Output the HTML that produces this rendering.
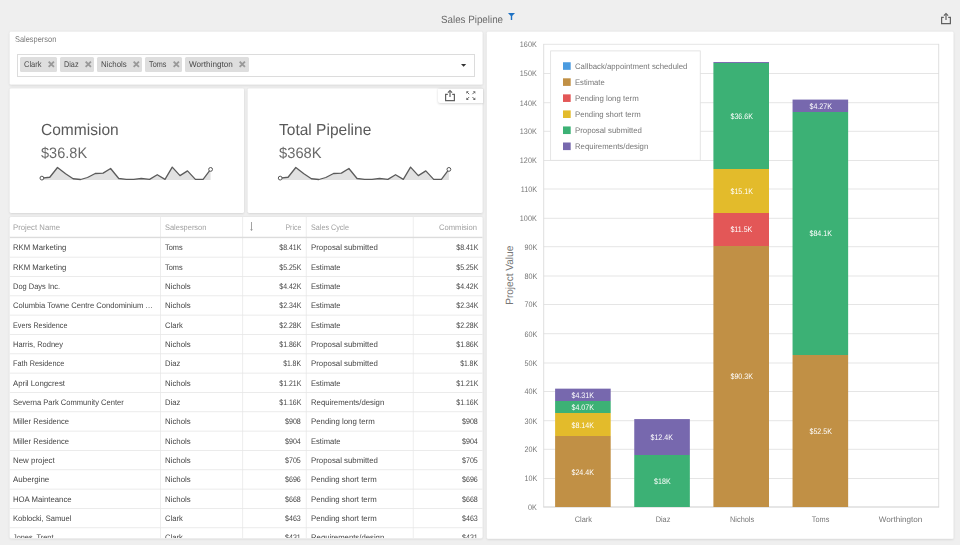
<!DOCTYPE html>
<html><head><meta charset="utf-8"><title>Sales Pipeline</title>
<style>
html,body{margin:0;padding:0}
body{width:960px;height:545px;overflow:hidden;position:relative;background:#efefef;font-family:"Liberation Sans",sans-serif}
.t{position:absolute;white-space:nowrap;line-height:1;display:block;text-rendering:geometricPrecision}
.p{position:absolute;background:#fff;box-shadow:0 .75px 2.25px rgba(0,0,0,.13);overflow:hidden}
.a{position:absolute}
svg{position:absolute;overflow:visible}
</style></head><body>
<svg style="left:0;top:0" width="0" height="0"><defs><filter id="sh" x="-5%" y="-5%" width="110%" height="112%"><feDropShadow dx="0" dy="0.6" stdDeviation="1.1" flood-color="#000" flood-opacity="0.14"/></filter></defs></svg>
<span class="t" style="top:15.00px;font-size:10.5px;color:#6a6a6a;left:440.78px;transform:scaleX(0.9324);transform-origin:0 0;">Sales Pipeline</span>
<svg style="left:507.9px;top:13.2px" width="7" height="7" viewBox="0 0 7 7"><path d="M0 0H7L4.2 3.1V7H2.8V3.1Z" fill="#1f72c4"/></svg>
<svg style="left:940.80px;top:13.00px" width="10" height="11.2" viewBox="0 0 10 11.2"><path d="M2.8 4.3H0.6V10.6H9.4V4.3H7.2" fill="none" stroke="#616161" stroke-width="1.2"/><path d="M5 7V1.2" fill="none" stroke="#616161" stroke-width="1.2"/><path d="M2.9 2.7L5 0.5L7.1 2.7" fill="none" stroke="#616161" stroke-width="1.2"/></svg>
<svg style="left:0;top:0" width="960" height="545" viewBox="0 0 960 545"><rect x="9.75" y="31.75" width="472.75" height="52.85" rx="1.4" fill="#fff" filter="url(#sh)"/></svg>
<span class="t" style="top:35.00px;font-size:8.5px;color:#7a7a7a;left:15.37px;transform:scaleX(0.8733);transform-origin:0 0;">Salesperson</span>
<div class="a" style="left:17.25px;top:54px;width:457.5px;height:23px;box-sizing:border-box;border:1px solid #dcdcdc;background:#fff"></div>
<div class="a" style="left:20px;top:57px;width:37.00px;height:14.6px;background:#dedede;border-radius:1.5px"></div>
<span class="t" style="top:60.00px;font-size:8.3px;color:#4a4a4a;left:23.93px;transform:scaleX(0.9060);transform-origin:0 0;">Clark</span>
<svg style="left:47.60px;top:61.30px" width="6.6" height="6.6" viewBox="0 0 6 6"><path d="M0.6 0.6L5.4 5.4M5.4 0.6L0.6 5.4" stroke="#999" stroke-width="1.7" fill="none"/></svg>
<div class="a" style="left:60px;top:57px;width:34.00px;height:14.6px;background:#dedede;border-radius:1.5px"></div>
<span class="t" style="top:60.00px;font-size:8.3px;color:#4a4a4a;left:63.93px;transform:scaleX(0.8761);transform-origin:0 0;">Diaz</span>
<svg style="left:84.60px;top:61.30px" width="6.6" height="6.6" viewBox="0 0 6 6"><path d="M0.6 0.6L5.4 5.4M5.4 0.6L0.6 5.4" stroke="#999" stroke-width="1.7" fill="none"/></svg>
<div class="a" style="left:97px;top:57px;width:45.25px;height:14.6px;background:#dedede;border-radius:1.5px"></div>
<span class="t" style="top:60.00px;font-size:8.3px;color:#4a4a4a;left:100.93px;transform:scaleX(0.9479);transform-origin:0 0;">Nichols</span>
<svg style="left:132.85px;top:61.30px" width="6.6" height="6.6" viewBox="0 0 6 6"><path d="M0.6 0.6L5.4 5.4M5.4 0.6L0.6 5.4" stroke="#999" stroke-width="1.7" fill="none"/></svg>
<div class="a" style="left:145.25px;top:57px;width:36.85px;height:14.6px;background:#dedede;border-radius:1.5px"></div>
<span class="t" style="top:60.00px;font-size:8.3px;color:#4a4a4a;left:149.18px;transform:scaleX(0.8773);transform-origin:0 0;">Toms</span>
<svg style="left:172.70px;top:61.30px" width="6.6" height="6.6" viewBox="0 0 6 6"><path d="M0.6 0.6L5.4 5.4M5.4 0.6L0.6 5.4" stroke="#999" stroke-width="1.7" fill="none"/></svg>
<div class="a" style="left:185.25px;top:57px;width:63.25px;height:14.6px;background:#dedede;border-radius:1.5px"></div>
<span class="t" style="top:60.00px;font-size:8.3px;color:#4a4a4a;left:189.18px;transform:scaleX(0.9820);transform-origin:0 0;">Worthington</span>
<svg style="left:239.10px;top:61.30px" width="6.6" height="6.6" viewBox="0 0 6 6"><path d="M0.6 0.6L5.4 5.4M5.4 0.6L0.6 5.4" stroke="#999" stroke-width="1.7" fill="none"/></svg>
<svg style="left:460.9px;top:64px" width="5.2" height="2.8" viewBox="0 0 5.2 2.8"><path d="M0 0H5.2L2.6 2.8Z" fill="#333"/></svg>
<svg style="left:0;top:0" width="960" height="545" viewBox="0 0 960 545"><rect x="9.75" y="88.4" width="234.25" height="124.60" rx="1.4" fill="#fff" filter="url(#sh)"/></svg>
<span class="t" style="top:123.00px;font-size:16px;color:#5a5a5a;left:40.53px;transform:scaleX(0.9709);transform-origin:0 0;">Commision</span>
<span class="t" style="top:146.00px;font-size:15.2px;color:#6a6a6a;left:40.82px;transform:scaleX(0.9573);transform-origin:0 0;">$36.8K</span>
<svg style="left:0;top:0" width="960" height="545" viewBox="0 0 960 545"><polygon points="41.90,179.9 41.90,178.10 49.75,177.25 57.50,167.50 65.60,173.75 73.10,178.75 80.60,179.50 87.50,177.50 95.25,173.50 103.10,173.10 110.60,168.50 118.75,178.50 126.25,179.40 133.75,179.40 141.25,178.50 149.60,179.40 157.25,174.75 165.00,179.40 172.25,167.10 180.00,175.60 187.50,170.90 195.40,179.40 203.10,179.40 210.60,169.40 210.60,179.9" fill="#e1e1e1"/><polyline points="41.90,178.10 49.75,177.25 57.50,167.50 65.60,173.75 73.10,178.75 80.60,179.50 87.50,177.50 95.25,173.50 103.10,173.10 110.60,168.50 118.75,178.50 126.25,179.40 133.75,179.40 141.25,178.50 149.60,179.40 157.25,174.75 165.00,179.40 172.25,167.10 180.00,175.60 187.50,170.90 195.40,179.40 203.10,179.40 210.60,169.40" fill="none" stroke="#5b5b5b" stroke-width="1.3" stroke-linejoin="round"/><circle cx="41.90" cy="178.10" r="1.9" fill="#fff" stroke="#555" stroke-width="1"/><circle cx="210.60" cy="169.40" r="1.9" fill="#fff" stroke="#555" stroke-width="1"/></svg>
<svg style="left:0;top:0" width="960" height="545" viewBox="0 0 960 545"><rect x="247.75" y="88.4" width="234.75" height="124.60" rx="1.4" fill="#fff" filter="url(#sh)"/></svg>
<span class="t" style="top:123.00px;font-size:16px;color:#5a5a5a;left:278.83px;transform:scaleX(0.9702);transform-origin:0 0;">Total Pipeline</span>
<span class="t" style="top:146.00px;font-size:15.2px;color:#6a6a6a;left:279.12px;transform:scaleX(0.9696);transform-origin:0 0;">$368K</span>
<svg style="left:0;top:0" width="960" height="545" viewBox="0 0 960 545"><polygon points="280.20,179.9 280.20,178.10 288.05,177.25 295.80,167.50 303.90,173.75 311.40,178.75 318.90,179.50 325.80,177.50 333.55,173.50 341.40,173.10 348.90,168.50 357.05,178.50 364.55,179.40 372.05,179.40 379.55,178.50 387.90,179.40 395.55,174.75 403.30,179.40 410.55,167.10 418.30,175.60 425.80,170.90 433.70,179.40 441.40,179.40 448.90,169.40 448.90,179.9" fill="#e1e1e1"/><polyline points="280.20,178.10 288.05,177.25 295.80,167.50 303.90,173.75 311.40,178.75 318.90,179.50 325.80,177.50 333.55,173.50 341.40,173.10 348.90,168.50 357.05,178.50 364.55,179.40 372.05,179.40 379.55,178.50 387.90,179.40 395.55,174.75 403.30,179.40 410.55,167.10 418.30,175.60 425.80,170.90 433.70,179.40 441.40,179.40 448.90,169.40" fill="none" stroke="#5b5b5b" stroke-width="1.3" stroke-linejoin="round"/><circle cx="280.20" cy="178.10" r="1.9" fill="#fff" stroke="#555" stroke-width="1"/><circle cx="448.90" cy="169.40" r="1.9" fill="#fff" stroke="#555" stroke-width="1"/></svg>
<div class="a" style="left:437.5px;top:88.5px;width:45px;height:14.8px;background:#fff;box-shadow:0 .75px 2.5px rgba(0,0,0,.16);border-radius:0 0 0 2px"></div>
<svg style="left:445.00px;top:89.80px" width="10" height="11.2" viewBox="0 0 10 11.2"><path d="M2.8 4.3H0.6V10.6H9.4V4.3H7.2" fill="none" stroke="#616161" stroke-width="1.2"/><path d="M5 7V1.2" fill="none" stroke="#616161" stroke-width="1.2"/><path d="M2.9 2.7L5 0.5L7.1 2.7" fill="none" stroke="#616161" stroke-width="1.2"/></svg>
<svg style="left:465.80px;top:90.80px" width="9.6" height="9.2" viewBox="0 0 9.6 9.2"><path d="M0.30 0.30h2.50l-2.50 2.50z" fill="#666"/><path d="M1.10 1.10L3.20 3.20" stroke="#666" stroke-width="1.0"/><path d="M9.30 0.30h-2.50l2.50 2.50z" fill="#666"/><path d="M8.50 1.10L6.40 3.20" stroke="#666" stroke-width="1.0"/><path d="M0.30 8.90h2.50l-2.50 -2.50z" fill="#666"/><path d="M1.10 8.10L3.20 6.00" stroke="#666" stroke-width="1.0"/><path d="M9.30 8.90h-2.50l2.50 -2.50z" fill="#666"/><path d="M8.50 8.10L6.40 6.00" stroke="#666" stroke-width="1.0"/></svg>
<svg style="left:0;top:0" width="960" height="545" viewBox="0 0 960 545"><rect x="9.75" y="217.0" width="472.75" height="321.20" rx="1.4" fill="#fff" filter="url(#sh)"/></svg>
<svg style="left:0;top:0" width="960" height="538.2" viewBox="0 0 960 538.2">
<rect x="160.00" y="217.0" width="0.8" height="321.20" fill="#e9e9e9"/>
<rect x="242.30" y="217.0" width="0.8" height="321.20" fill="#e9e9e9"/>
<rect x="305.80" y="217.0" width="0.8" height="321.20" fill="#e9e9e9"/>
<rect x="412.80" y="217.0" width="0.8" height="321.20" fill="#e9e9e9"/>
<rect x="9.75" y="236.75" width="472.75" height="1.4" fill="#dcdcdc"/>
<rect x="9.75" y="256.75" width="472.75" height="0.8" fill="#e6e6e6"/>
<rect x="9.75" y="276.08" width="472.75" height="0.8" fill="#e6e6e6"/>
<rect x="9.75" y="295.41" width="472.75" height="0.8" fill="#e6e6e6"/>
<rect x="9.75" y="314.74" width="472.75" height="0.8" fill="#e6e6e6"/>
<rect x="9.75" y="334.07" width="472.75" height="0.8" fill="#e6e6e6"/>
<rect x="9.75" y="353.40" width="472.75" height="0.8" fill="#e6e6e6"/>
<rect x="9.75" y="372.73" width="472.75" height="0.8" fill="#e6e6e6"/>
<rect x="9.75" y="392.06" width="472.75" height="0.8" fill="#e6e6e6"/>
<rect x="9.75" y="411.39" width="472.75" height="0.8" fill="#e6e6e6"/>
<rect x="9.75" y="430.72" width="472.75" height="0.8" fill="#e6e6e6"/>
<rect x="9.75" y="450.05" width="472.75" height="0.8" fill="#e6e6e6"/>
<rect x="9.75" y="469.38" width="472.75" height="0.8" fill="#e6e6e6"/>
<rect x="9.75" y="488.71" width="472.75" height="0.8" fill="#e6e6e6"/>
<rect x="9.75" y="508.04" width="472.75" height="0.8" fill="#e6e6e6"/>
<rect x="9.75" y="527.37" width="472.75" height="0.8" fill="#e6e6e6"/>
</svg>
<div class="a" style="left:0;top:0;width:960px;height:538.20px;overflow:hidden">
<span class="t" style="top:224.00px;font-size:8px;color:#a0a0a0;left:13.39px;transform:scaleX(0.9692);transform-origin:0 0;">Project Name</span>
<span class="t" style="top:224.00px;font-size:8px;color:#a0a0a0;left:165.00px;transform:scaleX(0.9300);transform-origin:0 0;">Salesperson</span>
<span class="t" style="top:224.00px;font-size:8px;color:#a0a0a0;right:659.25px;transform:scaleX(0.8641);transform-origin:100% 0;">Price</span>
<span class="t" style="top:224.00px;font-size:8px;color:#a0a0a0;left:310.89px;transform:scaleX(0.8989);transform-origin:0 0;">Sales Cycle</span>
<span class="t" style="top:224.00px;font-size:8px;color:#a0a0a0;right:482.50px;transform:scaleX(0.9498);transform-origin:100% 0;">Commision</span>
<svg style="left:248.95px;top:222px" width="5" height="9.2" viewBox="0 0 5 9.2"><path d="M2.5 0V8.2" fill="none" stroke="#999" stroke-width="0.9"/><path d="M1.1 7.3H3.9L2.5 9.1Z" fill="#999"/></svg>
<span class="t" style="top:244.00px;font-size:8px;color:#444;left:13.39px;transform:scaleX(0.9654);transform-origin:0 0;">RKM Marketing</span>
<span class="t" style="top:244.00px;font-size:8px;color:#444;left:164.64px;transform:scaleX(0.9271);transform-origin:0 0;">Toms</span>
<span class="t" style="top:244.00px;font-size:8px;color:#444;right:658.80px;transform:scaleX(0.8677);transform-origin:100% 0;">$8.41K</span>
<span class="t" style="top:244.00px;font-size:8px;color:#444;left:310.64px;transform:scaleX(0.9779);transform-origin:0 0;">Proposal submitted</span>
<span class="t" style="top:244.00px;font-size:8px;color:#444;right:482.10px;transform:scaleX(0.8677);transform-origin:100% 0;">$8.41K</span>
<span class="t" style="top:264.00px;font-size:8px;color:#444;left:13.39px;transform:scaleX(0.9654);transform-origin:0 0;">RKM Marketing</span>
<span class="t" style="top:264.00px;font-size:8px;color:#444;left:164.64px;transform:scaleX(0.9271);transform-origin:0 0;">Toms</span>
<span class="t" style="top:264.00px;font-size:8px;color:#444;right:658.80px;transform:scaleX(0.8677);transform-origin:100% 0;">$5.25K</span>
<span class="t" style="top:264.00px;font-size:8px;color:#444;left:310.64px;transform:scaleX(0.9469);transform-origin:0 0;">Estimate</span>
<span class="t" style="top:264.00px;font-size:8px;color:#444;right:482.10px;transform:scaleX(0.8677);transform-origin:100% 0;">$5.25K</span>
<span class="t" style="top:283.00px;font-size:8px;color:#444;left:13.39px;transform:scaleX(0.9349);transform-origin:0 0;">Dog Days Inc.</span>
<span class="t" style="top:283.00px;font-size:8px;color:#444;left:164.64px;transform:scaleX(0.9805);transform-origin:0 0;">Nichols</span>
<span class="t" style="top:283.00px;font-size:8px;color:#444;right:658.80px;transform:scaleX(0.8677);transform-origin:100% 0;">$4.42K</span>
<span class="t" style="top:283.00px;font-size:8px;color:#444;left:310.64px;transform:scaleX(0.9469);transform-origin:0 0;">Estimate</span>
<span class="t" style="top:283.00px;font-size:8px;color:#444;right:482.10px;transform:scaleX(0.8677);transform-origin:100% 0;">$4.42K</span>
<span class="t" style="top:302.00px;font-size:8px;color:#444;left:13.39px;transform:scaleX(0.9520);transform-origin:0 0;">Columbia Towne Centre Condominium …</span>
<span class="t" style="top:302.00px;font-size:8px;color:#444;left:164.64px;transform:scaleX(0.9805);transform-origin:0 0;">Nichols</span>
<span class="t" style="top:302.00px;font-size:8px;color:#444;right:658.80px;transform:scaleX(0.8677);transform-origin:100% 0;">$2.34K</span>
<span class="t" style="top:302.00px;font-size:8px;color:#444;left:310.64px;transform:scaleX(0.9469);transform-origin:0 0;">Estimate</span>
<span class="t" style="top:302.00px;font-size:8px;color:#444;right:482.10px;transform:scaleX(0.8677);transform-origin:100% 0;">$2.34K</span>
<span class="t" style="top:322.00px;font-size:8px;color:#444;left:13.39px;transform:scaleX(0.9007);transform-origin:0 0;">Evers Residence</span>
<span class="t" style="top:322.00px;font-size:8px;color:#444;left:164.64px;transform:scaleX(0.9492);transform-origin:0 0;">Clark</span>
<span class="t" style="top:322.00px;font-size:8px;color:#444;right:658.80px;transform:scaleX(0.8677);transform-origin:100% 0;">$2.28K</span>
<span class="t" style="top:322.00px;font-size:8px;color:#444;left:310.64px;transform:scaleX(0.9469);transform-origin:0 0;">Estimate</span>
<span class="t" style="top:322.00px;font-size:8px;color:#444;right:482.10px;transform:scaleX(0.8677);transform-origin:100% 0;">$2.28K</span>
<span class="t" style="top:341.00px;font-size:8px;color:#444;left:13.39px;transform:scaleX(0.9366);transform-origin:0 0;">Harris, Rodney</span>
<span class="t" style="top:341.00px;font-size:8px;color:#444;left:164.64px;transform:scaleX(0.9805);transform-origin:0 0;">Nichols</span>
<span class="t" style="top:341.00px;font-size:8px;color:#444;right:658.80px;transform:scaleX(0.8677);transform-origin:100% 0;">$1.86K</span>
<span class="t" style="top:341.00px;font-size:8px;color:#444;left:310.64px;transform:scaleX(0.9779);transform-origin:0 0;">Proposal submitted</span>
<span class="t" style="top:341.00px;font-size:8px;color:#444;right:482.10px;transform:scaleX(0.8677);transform-origin:100% 0;">$1.86K</span>
<span class="t" style="top:360.00px;font-size:8px;color:#444;left:13.39px;transform:scaleX(0.9141);transform-origin:0 0;">Fath Residence</span>
<span class="t" style="top:360.00px;font-size:8px;color:#444;left:164.64px;transform:scaleX(0.9510);transform-origin:0 0;">Diaz</span>
<span class="t" style="top:360.00px;font-size:8px;color:#444;right:658.80px;transform:scaleX(0.8490);transform-origin:100% 0;">$1.8K</span>
<span class="t" style="top:360.00px;font-size:8px;color:#444;left:310.64px;transform:scaleX(0.9779);transform-origin:0 0;">Proposal submitted</span>
<span class="t" style="top:360.00px;font-size:8px;color:#444;right:482.10px;transform:scaleX(0.8490);transform-origin:100% 0;">$1.8K</span>
<span class="t" style="top:380.00px;font-size:8px;color:#444;left:13.39px;transform:scaleX(0.9740);transform-origin:0 0;">April Longcrest</span>
<span class="t" style="top:380.00px;font-size:8px;color:#444;left:164.64px;transform:scaleX(0.9805);transform-origin:0 0;">Nichols</span>
<span class="t" style="top:380.00px;font-size:8px;color:#444;right:658.80px;transform:scaleX(0.8677);transform-origin:100% 0;">$1.21K</span>
<span class="t" style="top:380.00px;font-size:8px;color:#444;left:310.64px;transform:scaleX(0.9469);transform-origin:0 0;">Estimate</span>
<span class="t" style="top:380.00px;font-size:8px;color:#444;right:482.10px;transform:scaleX(0.8677);transform-origin:100% 0;">$1.21K</span>
<span class="t" style="top:399.00px;font-size:8px;color:#444;left:13.39px;transform:scaleX(0.9433);transform-origin:0 0;">Severna Park Community Center</span>
<span class="t" style="top:399.00px;font-size:8px;color:#444;left:164.64px;transform:scaleX(0.9510);transform-origin:0 0;">Diaz</span>
<span class="t" style="top:399.00px;font-size:8px;color:#444;right:658.80px;transform:scaleX(0.8677);transform-origin:100% 0;">$1.16K</span>
<span class="t" style="top:399.00px;font-size:8px;color:#444;left:310.64px;transform:scaleX(0.9685);transform-origin:0 0;">Requirements/design</span>
<span class="t" style="top:399.00px;font-size:8px;color:#444;right:482.10px;transform:scaleX(0.8677);transform-origin:100% 0;">$1.16K</span>
<span class="t" style="top:418.00px;font-size:8px;color:#444;left:13.39px;transform:scaleX(0.9482);transform-origin:0 0;">Miller Residence</span>
<span class="t" style="top:418.00px;font-size:8px;color:#444;left:164.64px;transform:scaleX(0.9805);transform-origin:0 0;">Nichols</span>
<span class="t" style="top:418.00px;font-size:8px;color:#444;right:658.80px;transform:scaleX(0.8878);transform-origin:100% 0;">$908</span>
<span class="t" style="top:418.00px;font-size:8px;color:#444;left:310.64px;transform:scaleX(0.9814);transform-origin:0 0;">Pending long term</span>
<span class="t" style="top:418.00px;font-size:8px;color:#444;right:482.10px;transform:scaleX(0.8878);transform-origin:100% 0;">$908</span>
<span class="t" style="top:438.00px;font-size:8px;color:#444;left:13.39px;transform:scaleX(0.9482);transform-origin:0 0;">Miller Residence</span>
<span class="t" style="top:438.00px;font-size:8px;color:#444;left:164.64px;transform:scaleX(0.9805);transform-origin:0 0;">Nichols</span>
<span class="t" style="top:438.00px;font-size:8px;color:#444;right:658.80px;transform:scaleX(0.8878);transform-origin:100% 0;">$904</span>
<span class="t" style="top:438.00px;font-size:8px;color:#444;left:310.64px;transform:scaleX(0.9469);transform-origin:0 0;">Estimate</span>
<span class="t" style="top:438.00px;font-size:8px;color:#444;right:482.10px;transform:scaleX(0.8878);transform-origin:100% 0;">$904</span>
<span class="t" style="top:457.00px;font-size:8px;color:#444;left:13.39px;transform:scaleX(0.9877);transform-origin:0 0;">New project</span>
<span class="t" style="top:457.00px;font-size:8px;color:#444;left:164.64px;transform:scaleX(0.9805);transform-origin:0 0;">Nichols</span>
<span class="t" style="top:457.00px;font-size:8px;color:#444;right:658.80px;transform:scaleX(0.8878);transform-origin:100% 0;">$705</span>
<span class="t" style="top:457.00px;font-size:8px;color:#444;left:310.64px;transform:scaleX(0.9779);transform-origin:0 0;">Proposal submitted</span>
<span class="t" style="top:457.00px;font-size:8px;color:#444;right:482.10px;transform:scaleX(0.8878);transform-origin:100% 0;">$705</span>
<span class="t" style="top:476.00px;font-size:8px;color:#444;left:13.39px;transform:scaleX(0.9931);transform-origin:0 0;">Aubergine</span>
<span class="t" style="top:476.00px;font-size:8px;color:#444;left:164.64px;transform:scaleX(0.9805);transform-origin:0 0;">Nichols</span>
<span class="t" style="top:476.00px;font-size:8px;color:#444;right:658.80px;transform:scaleX(0.8878);transform-origin:100% 0;">$696</span>
<span class="t" style="top:476.00px;font-size:8px;color:#444;left:310.64px;transform:scaleX(0.9723);transform-origin:0 0;">Pending short term</span>
<span class="t" style="top:476.00px;font-size:8px;color:#444;right:482.10px;transform:scaleX(0.8878);transform-origin:100% 0;">$696</span>
<span class="t" style="top:496.00px;font-size:8px;color:#444;left:13.39px;transform:scaleX(0.9685);transform-origin:0 0;">HOA Mainteance</span>
<span class="t" style="top:496.00px;font-size:8px;color:#444;left:164.64px;transform:scaleX(0.9805);transform-origin:0 0;">Nichols</span>
<span class="t" style="top:496.00px;font-size:8px;color:#444;right:658.80px;transform:scaleX(0.8878);transform-origin:100% 0;">$668</span>
<span class="t" style="top:496.00px;font-size:8px;color:#444;left:310.64px;transform:scaleX(0.9723);transform-origin:0 0;">Pending short term</span>
<span class="t" style="top:496.00px;font-size:8px;color:#444;right:482.10px;transform:scaleX(0.8878);transform-origin:100% 0;">$668</span>
<span class="t" style="top:515.00px;font-size:8px;color:#444;left:13.39px;transform:scaleX(0.9436);transform-origin:0 0;">Koblocki, Samuel</span>
<span class="t" style="top:515.00px;font-size:8px;color:#444;left:164.64px;transform:scaleX(0.9492);transform-origin:0 0;">Clark</span>
<span class="t" style="top:515.00px;font-size:8px;color:#444;right:658.80px;transform:scaleX(0.8878);transform-origin:100% 0;">$463</span>
<span class="t" style="top:515.00px;font-size:8px;color:#444;left:310.64px;transform:scaleX(0.9723);transform-origin:0 0;">Pending short term</span>
<span class="t" style="top:515.00px;font-size:8px;color:#444;right:482.10px;transform:scaleX(0.8878);transform-origin:100% 0;">$463</span>
<span class="t" style="top:534.00px;font-size:8px;color:#444;left:13.39px;transform:scaleX(0.9193);transform-origin:0 0;">Jones, Trent</span>
<span class="t" style="top:534.00px;font-size:8px;color:#444;left:164.64px;transform:scaleX(0.9492);transform-origin:0 0;">Clark</span>
<span class="t" style="top:534.00px;font-size:8px;color:#444;right:658.80px;transform:scaleX(0.8878);transform-origin:100% 0;">$431</span>
<span class="t" style="top:534.00px;font-size:8px;color:#444;left:310.64px;transform:scaleX(0.9685);transform-origin:0 0;">Requirements/design</span>
<span class="t" style="top:534.00px;font-size:8px;color:#444;right:482.10px;transform:scaleX(0.8878);transform-origin:100% 0;">$431</span>
</div>
<svg style="left:0;top:0" width="960" height="545" viewBox="0 0 960 545"><rect x="486.9" y="31.75" width="466.50" height="507.10" rx="1.4" fill="#fff" filter="url(#sh)"/></svg>
<svg style="left:0;top:0" width="960" height="545" viewBox="0 0 960 545" shape-rendering="auto">
<rect x="543.75" y="506.60" width="395.0" height="0.8" fill="#dfdfdf"/>
<rect x="543.75" y="478.10" width="395.0" height="0.8" fill="#dfdfdf"/>
<rect x="543.75" y="448.85" width="395.0" height="0.8" fill="#dfdfdf"/>
<rect x="543.75" y="420.35" width="395.0" height="0.8" fill="#dfdfdf"/>
<rect x="543.75" y="391.10" width="395.0" height="0.8" fill="#dfdfdf"/>
<rect x="543.75" y="362.60" width="395.0" height="0.8" fill="#dfdfdf"/>
<rect x="543.75" y="333.35" width="395.0" height="0.8" fill="#dfdfdf"/>
<rect x="543.75" y="304.10" width="395.0" height="0.8" fill="#dfdfdf"/>
<rect x="543.75" y="275.60" width="395.0" height="0.8" fill="#dfdfdf"/>
<rect x="543.75" y="246.35" width="395.0" height="0.8" fill="#dfdfdf"/>
<rect x="543.75" y="217.85" width="395.0" height="0.8" fill="#dfdfdf"/>
<rect x="543.75" y="188.60" width="395.0" height="0.8" fill="#dfdfdf"/>
<rect x="543.75" y="160.10" width="395.0" height="0.8" fill="#dfdfdf"/>
<rect x="543.75" y="130.85" width="395.0" height="0.8" fill="#dfdfdf"/>
<rect x="543.75" y="102.35" width="395.0" height="0.8" fill="#dfdfdf"/>
<rect x="543.75" y="73.10" width="395.0" height="0.8" fill="#dfdfdf"/>
<rect x="543.75" y="43.85" width="395.0" height="0.8" fill="#dfdfdf"/>
<rect x="543.35" y="43.85" width="0.8" height="463.55" fill="#d8d8d8"/>
<rect x="938.35" y="43.85" width="0.8" height="463.55" fill="#d8d8d8"/>
<rect x="543.35" y="506.6" width="395.8" height="0.8" fill="#d4d4d4"/>
<defs><linearGradient id="g0" gradientUnits="userSpaceOnUse" x1="0" y1="388.65" x2="0" y2="507.0"><stop offset="0.00000" stop-color="#7768ae"/><stop offset="0.10533" stop-color="#7768ae"/><stop offset="0.10533" stop-color="#3cb175"/><stop offset="0.20479" stop-color="#3cb175"/><stop offset="0.20479" stop-color="#e3bb2b"/><stop offset="0.40371" stop-color="#e3bb2b"/><stop offset="0.40371" stop-color="#c19045"/><stop offset="1.00000" stop-color="#c19045"/></linearGradient></defs><rect x="555.10" y="388.65" width="55.6" height="118.35" fill="url(#g0)"/>
<defs><linearGradient id="g1" gradientUnits="userSpaceOnUse" x1="0" y1="419.08" x2="0" y2="507.0"><stop offset="0.00000" stop-color="#7768ae"/><stop offset="0.40789" stop-color="#7768ae"/><stop offset="0.40789" stop-color="#3cb175"/><stop offset="1.00000" stop-color="#3cb175"/></linearGradient></defs><rect x="634.25" y="419.08" width="55.6" height="87.92" fill="url(#g1)"/>
<defs><linearGradient id="g2" gradientUnits="userSpaceOnUse" x1="0" y1="62.04" x2="0" y2="507.0"><stop offset="0.00000" stop-color="#7768ae"/><stop offset="0.00227" stop-color="#7768ae"/><stop offset="0.00227" stop-color="#3cb175"/><stop offset="0.24017" stop-color="#3cb175"/><stop offset="0.24017" stop-color="#e3bb2b"/><stop offset="0.33832" stop-color="#e3bb2b"/><stop offset="0.33832" stop-color="#e35757"/><stop offset="0.41306" stop-color="#e35757"/><stop offset="0.41306" stop-color="#c19045"/><stop offset="1.00000" stop-color="#c19045"/></linearGradient></defs><rect x="713.40" y="62.04" width="55.6" height="444.96" fill="url(#g2)"/>
<defs><linearGradient id="g3" gradientUnits="userSpaceOnUse" x1="0" y1="99.58" x2="0" y2="507.0"><stop offset="0.00000" stop-color="#7768ae"/><stop offset="0.03031" stop-color="#7768ae"/><stop offset="0.03031" stop-color="#3cb175"/><stop offset="0.62732" stop-color="#3cb175"/><stop offset="0.62732" stop-color="#c19045"/><stop offset="1.00000" stop-color="#c19045"/></linearGradient></defs><rect x="792.55" y="99.58" width="55.6" height="407.42" fill="url(#g3)"/>
</svg>
<span class="t" style="top:469.00px;font-size:8px;color:#fff;left:570.22px;transform:scaleX(0.8850);transform-origin:50% 0;">$24.4K</span>
<span class="t" style="top:422.00px;font-size:8px;color:#fff;left:570.22px;transform:scaleX(0.8850);transform-origin:50% 0;">$8.14K</span>
<span class="t" style="top:404.00px;font-size:8px;color:#fff;left:570.22px;transform:scaleX(0.8850);transform-origin:50% 0;">$4.07K</span>
<span class="t" style="top:392.00px;font-size:8px;color:#fff;left:570.22px;transform:scaleX(0.8850);transform-origin:50% 0;">$4.31K</span>
<span class="t" style="top:478.00px;font-size:8px;color:#fff;left:652.71px;transform:scaleX(0.8850);transform-origin:50% 0;">$18K</span>
<span class="t" style="top:434.00px;font-size:8px;color:#fff;left:649.37px;transform:scaleX(0.8850);transform-origin:50% 0;">$12.4K</span>
<span class="t" style="top:373.00px;font-size:8px;color:#fff;left:728.52px;transform:scaleX(0.8850);transform-origin:50% 0;">$90.3K</span>
<span class="t" style="top:226.00px;font-size:8px;color:#fff;left:728.82px;transform:scaleX(0.8850);transform-origin:50% 0;">$11.5K</span>
<span class="t" style="top:188.00px;font-size:8px;color:#fff;left:728.52px;transform:scaleX(0.8850);transform-origin:50% 0;">$15.1K</span>
<span class="t" style="top:113.00px;font-size:8px;color:#fff;left:728.52px;transform:scaleX(0.8850);transform-origin:50% 0;">$36.6K</span>
<span class="t" style="top:428.00px;font-size:8px;color:#fff;left:807.67px;transform:scaleX(0.8850);transform-origin:50% 0;">$52.5K</span>
<span class="t" style="top:230.00px;font-size:8px;color:#fff;left:807.67px;transform:scaleX(0.8850);transform-origin:50% 0;">$84.1K</span>
<span class="t" style="top:103.00px;font-size:8px;color:#fff;left:807.67px;transform:scaleX(0.8850);transform-origin:50% 0;">$4.27K</span>
<span class="t" style="top:516.00px;font-size:8px;color:#767676;left:574.07px;transform:scaleX(0.9200);transform-origin:50% 0;">Clark</span>
<span class="t" style="top:516.00px;font-size:8px;color:#767676;left:654.55px;transform:scaleX(0.9200);transform-origin:50% 0;">Diaz</span>
<span class="t" style="top:516.00px;font-size:8px;color:#767676;left:728.58px;transform:scaleX(0.9200);transform-origin:50% 0;">Nichols</span>
<span class="t" style="top:516.00px;font-size:8px;color:#767676;left:811.29px;transform:scaleX(0.9200);transform-origin:50% 0;">Toms</span>
<span class="t" style="top:516.00px;font-size:8px;color:#767676;left:878.51px;transform:scaleX(1.0096);transform-origin:50% 0;">Worthington</span>
<span class="t" style="top:504.00px;font-size:8px;color:#767676;right:423.20px;transform:scaleX(0.9000);transform-origin:100% 0;">0K</span>
<span class="t" style="top:475.00px;font-size:8px;color:#767676;right:423.20px;transform:scaleX(0.9000);transform-origin:100% 0;">10K</span>
<span class="t" style="top:446.00px;font-size:8px;color:#767676;right:423.20px;transform:scaleX(0.9000);transform-origin:100% 0;">20K</span>
<span class="t" style="top:418.00px;font-size:8px;color:#767676;right:423.20px;transform:scaleX(0.9000);transform-origin:100% 0;">30K</span>
<span class="t" style="top:388.00px;font-size:8px;color:#767676;right:423.20px;transform:scaleX(0.9000);transform-origin:100% 0;">40K</span>
<span class="t" style="top:360.00px;font-size:8px;color:#767676;right:423.20px;transform:scaleX(0.9000);transform-origin:100% 0;">50K</span>
<span class="t" style="top:331.00px;font-size:8px;color:#767676;right:423.20px;transform:scaleX(0.9000);transform-origin:100% 0;">60K</span>
<span class="t" style="top:301.00px;font-size:8px;color:#767676;right:423.20px;transform:scaleX(0.9000);transform-origin:100% 0;">70K</span>
<span class="t" style="top:273.00px;font-size:8px;color:#767676;right:423.20px;transform:scaleX(0.9000);transform-origin:100% 0;">80K</span>
<span class="t" style="top:244.00px;font-size:8px;color:#767676;right:423.20px;transform:scaleX(0.9000);transform-origin:100% 0;">90K</span>
<span class="t" style="top:215.00px;font-size:8px;color:#767676;right:423.20px;transform:scaleX(0.9000);transform-origin:100% 0;">100K</span>
<span class="t" style="top:186.00px;font-size:8px;color:#767676;right:423.20px;transform:scaleX(0.9000);transform-origin:100% 0;">110K</span>
<span class="t" style="top:157.00px;font-size:8px;color:#767676;right:423.20px;transform:scaleX(0.9000);transform-origin:100% 0;">120K</span>
<span class="t" style="top:128.00px;font-size:8px;color:#767676;right:423.20px;transform:scaleX(0.9000);transform-origin:100% 0;">130K</span>
<span class="t" style="top:100.00px;font-size:8px;color:#767676;right:423.20px;transform:scaleX(0.9000);transform-origin:100% 0;">140K</span>
<span class="t" style="top:70.00px;font-size:8px;color:#767676;right:423.20px;transform:scaleX(0.9000);transform-origin:100% 0;">150K</span>
<span class="t" style="top:41.00px;font-size:8px;color:#767676;right:423.20px;transform:scaleX(0.9000);transform-origin:100% 0;">160K</span>
<span class="t" style="left:479.16px;top:270.15px;font-size:10.5px;color:#767676;transform:rotate(-90deg) scaleX(0.9567);transform-origin:50% 50%">Project Value</span>
<svg style="left:0;top:0" width="960" height="545" viewBox="0 0 960 545">
<rect x="550.65" y="50.9" width="149.6" height="109.4" fill="#fff" stroke="#dedede" stroke-width="0.8"/>
<rect x="563" y="62.25" width="7.7" height="7.6" fill="#4a9be0"/>
<rect x="563" y="78.30" width="7.7" height="7.6" fill="#c19045"/>
<rect x="563" y="94.35" width="7.7" height="7.6" fill="#e35757"/>
<rect x="563" y="110.40" width="7.7" height="7.6" fill="#e3bb2b"/>
<rect x="563" y="126.45" width="7.7" height="7.6" fill="#3cb175"/>
<rect x="563" y="142.50" width="7.7" height="7.6" fill="#7768ae"/>
</svg>
<span class="t" style="top:63.00px;font-size:8px;color:#767676;left:574.89px;transform:scaleX(0.9714);transform-origin:0 0;">Callback/appointment scheduled</span>
<span class="t" style="top:79.00px;font-size:8px;color:#767676;left:574.89px;transform:scaleX(0.9550);transform-origin:0 0;">Estimate</span>
<span class="t" style="top:95.00px;font-size:8px;color:#767676;left:574.89px;transform:scaleX(0.9814);transform-origin:0 0;">Pending long term</span>
<span class="t" style="top:111.00px;font-size:8px;color:#767676;left:574.89px;transform:scaleX(0.9723);transform-origin:0 0;">Pending short term</span>
<span class="t" style="top:127.00px;font-size:8px;color:#767676;left:574.89px;transform:scaleX(0.9772);transform-origin:0 0;">Proposal submitted</span>
<span class="t" style="top:143.00px;font-size:8px;color:#767676;left:574.89px;transform:scaleX(0.9685);transform-origin:0 0;">Requirements/design</span>
</body></html>
